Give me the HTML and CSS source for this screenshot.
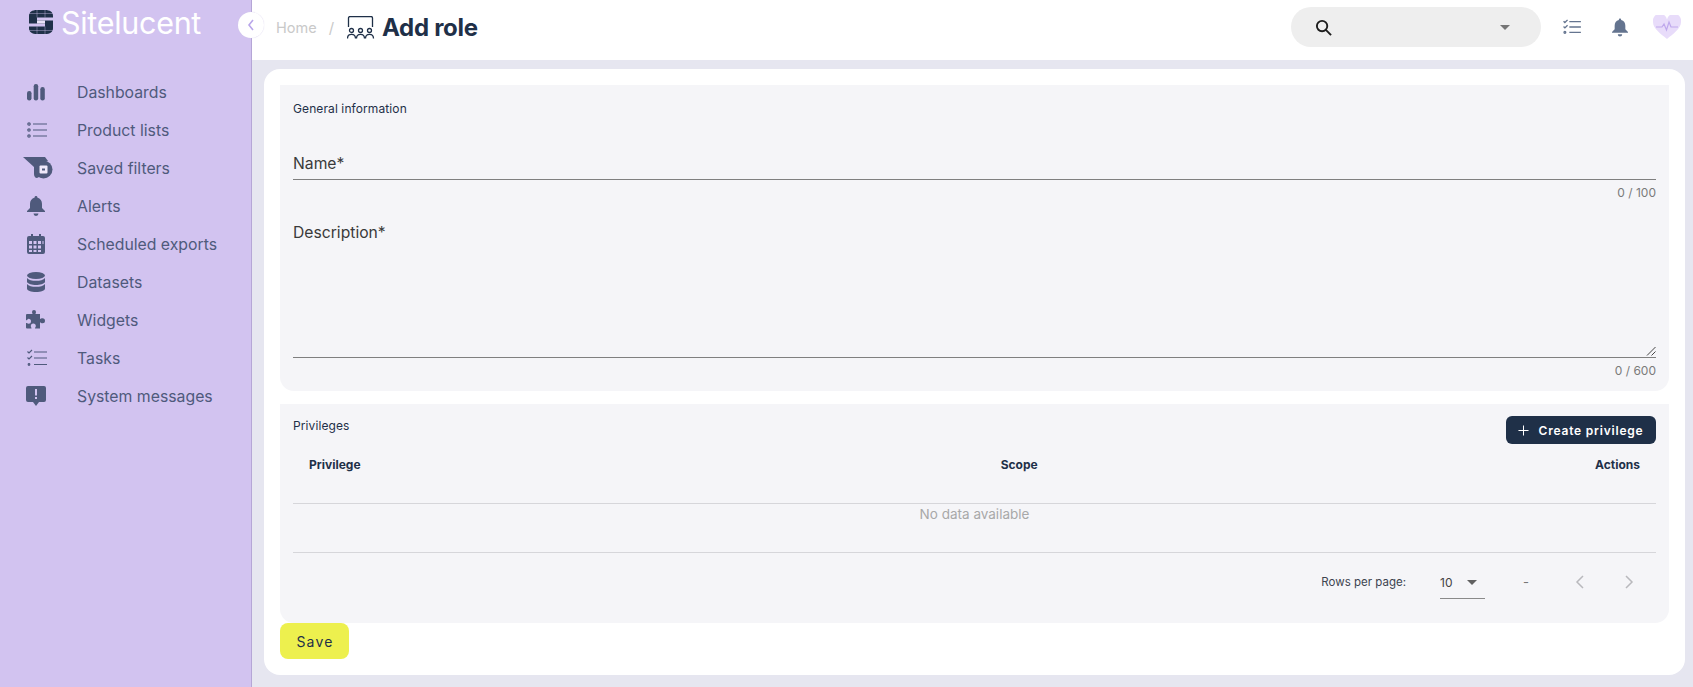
FILE: index.html
```html
<!DOCTYPE html>
<html lang="en">
<head>
<meta charset="utf-8">
<title>Add role</title>
<link rel="stylesheet" href="styles.css">
</head>
<body>
<div class="app">
  <aside class="sidebar">
    <div class="brand">
      <svg class="brand-mark" viewBox="0 0 24 24"><path fill="#1f3048" d="M8 0h8c5 0 8 2 8 6v12c0 4-3 6-8 6H8c-5 0-8-2-8-6V6c0-4 3-6 8-6z"/><path fill="#d2c3f0" d="M8 7.500h16V10.500H8zM0 13.500h16V16.500H0z"/><path fill="#e9e2f7" d="M8 10.500h8v3H8z"/><path stroke="#d2c3f0" stroke-width=".4" fill="none" d="M8 0v7.500M16 0v7.500M8 16.500V24M16 16.500V24M0 3.500h24M0 20.500h24"/></svg>
      <span class="brand-name">Sitelucent</span>
    </div>
    <nav class="nav">
      <a class="nav-item"><svg class="nav-icon" viewBox="0 0 18 18"><rect x="0" y="8" width="4.500" height="9.500" rx="2.200"/><rect x="6.700" y="1" width="4.500" height="16.500" rx="2.200"/><rect x="13.300" y="4" width="4.500" height="13.500" rx="2.200"/></svg><span>Dashboards</span></a>
      <a class="nav-item"><svg class="nav-icon nav-icon-line" viewBox="0 0 20 18"><circle cx="2" cy="3" r="1.200"/><circle cx="2" cy="9" r="1.200"/><circle cx="2" cy="15" r="1.200"/><path d="M6 3h14M6 9h14M6 15h14"/></svg><span>Product lists</span></a>
      <a class="nav-item"><svg class="nav-icon nav-icon-wide" viewBox="0 0 30 22"><path d="M0 0h22l3 4c-5 0-9 3-9 8v8l-2 1c-2 0-3-2-3-4v-7z"/><circle cx="20.500" cy="12.500" r="9"/><rect class="disk" x="16.500" y="8.500" width="8" height="8" rx="1"/><rect x="19" y="11.500" width="3" height="2"/></svg><span>Saved filters</span></a>
      <a class="nav-item"><svg class="nav-icon" viewBox="0 0 18 20"><path d="M9 0a1.300 1.300 0 0 1 1.300 1.500C13.500 2.200 15 5 15 8v4l3 3v1H0v-1l3-3V8c0-3 1.500-5.800 4.700-6.500A1.300 1.300 0 0 1 9 0zM6.500 17.500h5a2.500 2.500 0 0 1-5 0z"/></svg><span>Alerts</span></a>
      <a class="nav-item"><svg class="nav-icon" viewBox="0 0 18 20"><path fill-rule="evenodd" d="M4 0h2v2h6V0h2v2h2a2 2 0 0 1 2 2v14a2 2 0 0 1-2 2H2a2 2 0 0 1-2-2V4a2 2 0 0 1 2-2h2zM2 7v3h3V7zm4.500 0v3h3V7zM11 7v3h3V7zm4.500 0v3H16.500V7zM2 11.500v3h3v-3zm4.500 0v3h3v-3zm4.500 0v3h3v-3zM2 16v2h3v-2zm4.500 0v2h3v-2zm4.500 0v2h3v-2z"/></svg><span>Scheduled exports</span></a>
      <a class="nav-item"><svg class="nav-icon" viewBox="0 0 18 20"><ellipse cx="9" cy="3.500" rx="9" ry="3.500"/><path d="M0 6c1.500 2 5 2.800 9 2.800S16.500 8 18 6v4c-1 2-5 3-9 3s-8-1-9-3z"/><path d="M0 12c1.500 2 5 2.800 9 2.800s7.500-.8 9-2.800v4.500c0 2-4 3.500-9 3.500s-9-1.500-9-3.500z"/></svg><span>Datasets</span></a>
      <a class="nav-item"><svg class="nav-icon nav-icon-puzzle" viewBox="0 0 20 20"><path d="M8 0a2 2 0 0 1 2 2c0 .8-.5 1-.5 2H14v5c1 0 1.200-.7 2.500-.7a2.500 2.500 0 0 1 0 5c-1.300 0-1.500-.8-2.500-.8v6H9c0-1 .8-1.300.8-2.500a2.500 2.500 0 0 0-5 0c0 1.200.7 1.500.7 2.500H1a1 1 0 0 1-1-1v-4.500c1 0 1.300.7 2.500.7a2.500 2.500 0 0 0 0-5C1.300 9.500 1 10.200 0 10.200V5a1 1 0 0 1 1-1h5.500C6.500 3 6 2.800 6 2a2 2 0 0 1 2-2z"/></svg><span>Widgets</span></a>
      <a class="nav-item"><svg class="nav-icon nav-icon-line" viewBox="0 0 20 18"><path class="thin" d="M.500 2.500l1.500 1.500 3-3M.500 8.500l1.500 1.500 3-3"/><circle cx="2" cy="15.500" r=".8"/><path d="M7 3h13M7 9h13M7 15.500h13"/></svg><span>Tasks</span></a>
      <a class="nav-item"><svg class="nav-icon nav-icon-msg" viewBox="0 0 20 20"><path fill-rule="evenodd" d="M2 0h16a2 2 0 0 1 2 2v12a2 2 0 0 1-2 2h-5l-3 4-3-4H2a2 2 0 0 1-2-2V2a2 2 0 0 1 2-2zm7 3v6.500h2V3zm0 8v2h2v-2z"/></svg><span>System messages</span></a>
    </nav>
  </aside>

  <button class="collapse" type="button" aria-label="Collapse"><svg viewBox="0 0 10 14"><path d="M7 2L3 7l4 5"/></svg></button>

  <div class="column">
    <header class="topbar">
      <div class="crumbs">
        <span class="crumb">Home</span>
        <span class="crumb-sep">/</span>
        <svg class="title-icon" viewBox="0 0 28 23"><path class="st" d="M1.500 11V2a1.500 1.500 0 0 1 1.500-1.500h21A1.500 1.500 0 0 1 25.500 2v9"/><circle class="st" cx="4.500" cy="14.500" r="2"/><circle class="st" cx="13.500" cy="14.500" r="2"/><circle class="st" cx="22.500" cy="14.500" r="2"/><path class="st" d="M.500 22.500c0-5.500 8-5.500 8 0M9.500 22.500c0-5.500 8-5.500 8 0M18.500 22.500c0-5.500 8-5.500 8 0"/></svg>
        <h1 class="title">Add role</h1>
      </div>
      <div class="tools">
        <div class="search">
          <svg class="search-icon" viewBox="0 0 18 18"><circle cx="7.500" cy="7.500" r="5.500"/><path d="M11.500 11.500L17 17"/></svg>
          <span class="caret caret-search"></span>
        </div>
        <svg class="tool-tasks" viewBox="0 0 20 18"><path class="thin" d="M.500 2.500l1.500 1.500 3-3M.500 8.500l1.500 1.500 3-3"/><circle cx="2" cy="15" r="1"/><path d="M7 3h13M7 9h13M7 15h13"/></svg>
        <svg class="tool-bell" viewBox="0 0 18 20"><path d="M9 0a1.300 1.300 0 0 1 1.300 1.500C13.500 2.200 15 5 15 8v4l3 3v1H0v-1l3-3V8c0-3 1.500-5.800 4.700-6.500A1.300 1.300 0 0 1 9 0zM6.500 17.500h5a2.500 2.500 0 0 1-5 0z"/></svg>
        <svg class="tool-heart" viewBox="0 0 28 24"><path class="heart" d="M14 24C8 19 0 13.500 0 7a7 7 0 0 1 14-2.500A7 7 0 0 1 28 7c0 6.500-8 12-14 17z"/><path class="pulse" d="M3 12h6l2-3 2.500 6 2.500-8 2 5h7"/></svg>
      </div>
    </header>

    <main class="content">
      <div class="card">
        <section class="panel panel-general">
          <h2 class="panel-title">General information</h2>
          <div class="field field-name">
            <label class="field-label">Name*</label>
          </div>
          <div class="counter">0 / 100</div>
          <div class="field field-desc">
            <label class="field-label">Description*</label>
            <svg class="grip" viewBox="0 0 10 10"><path d="M9.500 1L1 9.500M9.500 5.500L5.500 9.500"/></svg>
          </div>
          <div class="counter">0 / 600</div>
        </section>

        <section class="panel panel-priv">
          <div class="priv-head">
            <h2 class="panel-title">Privileges</h2>
            <button class="btn-create" type="button"><svg viewBox="0 0 12 12"><path d="M6 .5v11M.5 6h11"/></svg>Create privilege</button>
          </div>
          <div class="table-head">
            <span>Privilege</span>
            <span>Scope</span>
            <span class="right">Actions</span>
          </div>
          <div class="table-empty">No data available</div>
          <div class="pager">
            <span class="pager-label">Rows per page:</span>
            <span class="pager-select"><span>10</span><span class="caret caret-pager"></span></span>
            <span class="pager-range">-</span>
            <svg class="chev" viewBox="0 0 10 14"><path d="M8 1L2 7l6 6"/></svg>
            <svg class="chev" viewBox="0 0 10 14"><path d="M2 1l6 6-6 6"/></svg>
          </div>
        </section>

        <button class="btn-save" type="button">Save</button>
      </div>
    </main>
  </div>
</div>
</body>
</html>
```
FILE: styles.css
```css
* { box-sizing: border-box; }
html, body { margin: 0; height: 100%; }
body { font-family: Inter, "Noto Sans", sans-serif; color: #1f3048; overflow: hidden; background: #e6e6f0; }
h1, h2 { margin: 0; font-weight: normal; }
button { font-family: inherit; border: 0; cursor: pointer; }

.app { display: flex; height: 687px; position: relative; }

.sidebar { width: 252px; flex: none; background: #d2c3f0; border-right: 1px solid #b5a6d6; padding: 10px 0 0 29px; }
.brand { display: flex; align-items: center; gap: 8px; height: 24px; }
.brand-mark { width: 24px; height: 24px; }
.brand-name { color: #fff; font-size: 30.500px; font-weight: 400; letter-spacing: -.3px; line-height: 24px; padding-top: 2px; }
.nav { margin-top: 39px; margin-left: -4px; display: flex; flex-direction: column; }
.nav-item { height: 38px; display: flex; align-items: center; color: #4f5a7c; font-size: 15.800px; }
.nav-icon { width: 18px; height: 20px; flex: none; margin: 0 32px 0 2px; fill: #4f5a7c; }
.nav-icon-line { width: 20px; height: 18px; margin: 0 30px 0 2px; stroke: #4f5a7c; stroke-width: 1.200; }
.nav-icon-line circle { fill: none; }
.nav-icon-line .thin { fill: none; }
.nav-icon-wide { width: 30px; height: 22px; margin: 0 24px 0 -2px; }
.disk { fill: #efe9fa; }
.nav-icon-puzzle { width: 20px; height: 20px; margin: 0 31px 0 1px; }
.nav-icon-msg { width: 20px; height: 20px; margin: 0 31px 0 1px; }

.collapse { position: absolute; left: 238px; top: 12px; width: 26px; height: 26px; border-radius: 50%; background: #fff; padding: 6px 8px; display: flex; box-shadow: 0 0 1px #cfc6e8; }
.collapse svg { width: 10px; height: 14px; fill: none; stroke: #b9a6ea; stroke-width: 1.600; }

.column { flex: 1; min-width: 0; display: flex; flex-direction: column; }

.topbar { height: 60px; flex: none; background: #fff; display: flex; align-items: center; justify-content: space-between; padding: 0 12px 6px 24px; }
.crumbs { display: flex; align-items: center; }
.crumb { font-size: 14.500px; color: #c9c9c9; }
.crumb-sep { font-size: 15px; color: #c9c9c9; margin: 0 13px 0 12px; }
.title-icon { width: 28px; height: 23px; margin-right: 7px; }
.title-icon .st { fill: none; stroke: #1f3048; stroke-width: 1.300; }
.title { font-size: 24px; font-weight: 700; color: #1f3048; letter-spacing: -.3px; }

.tools { display: flex; align-items: center; }
.search { width: 250px; height: 40px; border-radius: 20px; background: #eeeeee; display: flex; align-items: center; justify-content: space-between; padding: 0 31px 0 24px; margin-right: 22px; }
.search-icon { width: 17px; height: 17px; fill: none; stroke: #1c1c1c; stroke-width: 2; }
.caret { width: 0; height: 0; border-left: 5px solid transparent; border-right: 5px solid transparent; border-top: 5px solid #757575; display: block; }
.tool-tasks { width: 18px; height: 16px; margin-right: 31px; stroke: #64748f; stroke-width: 1.500; fill: none; }
.tool-bell { width: 16px; height: 19px; margin-right: 25px; fill: #64748f; }
.tool-heart { width: 28px; height: 24px; }
.heart { fill: #e8dcfa; }
.pulse { fill: none; stroke: #bfa8ec; stroke-width: 1.200; }

.content { flex: 1; padding: 9px 8px 12px 12px; }
.card { height: 606px; background: #fff; border-radius: 16px; padding: 16px 16px 0; }
.panel { background: #f5f5f8; padding: 0 13px; }
.panel-general { height: 306px; border-radius: 0 0 14px 14px; padding-top: 16px; }
.panel-priv { height: 219px; margin-top: 13px; border-radius: 0 0 14px 14px; }
.panel-title { font-size: 12px; line-height: 15px; color: #1f3048; letter-spacing: .1px; }

.field { border-bottom: 1px solid #7f7f7f; position: relative; }
.field-label { font-size: 15.700px; color: #3a3a3a; display: block; }
.field-name { margin-top: 31px; height: 33px; padding-top: 7px; }
.field-desc { margin-top: 12px; height: 146px; padding-top: 11px; }
.counter { font-size: 12px; line-height: 14px; text-align: right; color: #7a7a7a; margin-top: 6px; }
.grip { position: absolute; right: 0; bottom: 1px; width: 10px; height: 10px; fill: none; stroke: #444; stroke-width: 1; }

.priv-head { display: flex; justify-content: space-between; align-items: flex-start; padding-top: 12px; }
.priv-head .panel-title { padding-top: 2px; }
.btn-create { width: 150px; height: 28px; border-radius: 6px; background: #1f3048; color: #fff; font-size: 12px; font-weight: 600; letter-spacing: .8px; display: flex; align-items: center; justify-content: center; gap: 9px; padding: 0; }
.btn-create svg { width: 11px; height: 11px; fill: none; stroke: #fff; stroke-width: 1.100; }

.table-head { display: grid; grid-template-columns: 1fr 1fr 1fr; margin-top: 5px; padding: 0 16px; height: 55px; border-bottom: 1px solid #d6d6da; font-size: 12px; font-weight: 700; line-height: 32px; }
.table-head span:nth-child(2) { padding-left: 248px; }
.right { text-align: right; }
.table-empty { height: 49px; border-bottom: 1px solid #d6d6da; text-align: center; font-size: 13.500px; color: #a8a8a8; padding-top: 1px; line-height: 19px; }
.pager { display: flex; align-items: center; justify-content: flex-end; height: 57px; padding-right: 22px; font-size: 11.500px; color: #444; }
.pager-label { margin-right: 34px; color: #3d4450; }
.pager-select { width: 45px; height: 29px; border-bottom: 1px solid #8a8a8a; display: flex; align-items: center; justify-content: space-between; padding: 0 8px 4px 0; margin: 6px 38px 0 0; font-size: 12px; }
.caret-pager { border-top-color: #616161; }
.pager-range { width: 52px; color: #777; font-size: 13px; }
.chev { width: 10px; height: 14px; fill: none; stroke: #b9b9bd; stroke-width: 1.500; }
.chev + .chev { margin-left: 39px; }

.btn-save { width: 69px; height: 36px; display: block; border-radius: 8px; background: #edf04e; color: #1f3048; font-size: 14px; font-weight: 400; letter-spacing: 1.200px; padding: 0 0 0 1px; }
```
